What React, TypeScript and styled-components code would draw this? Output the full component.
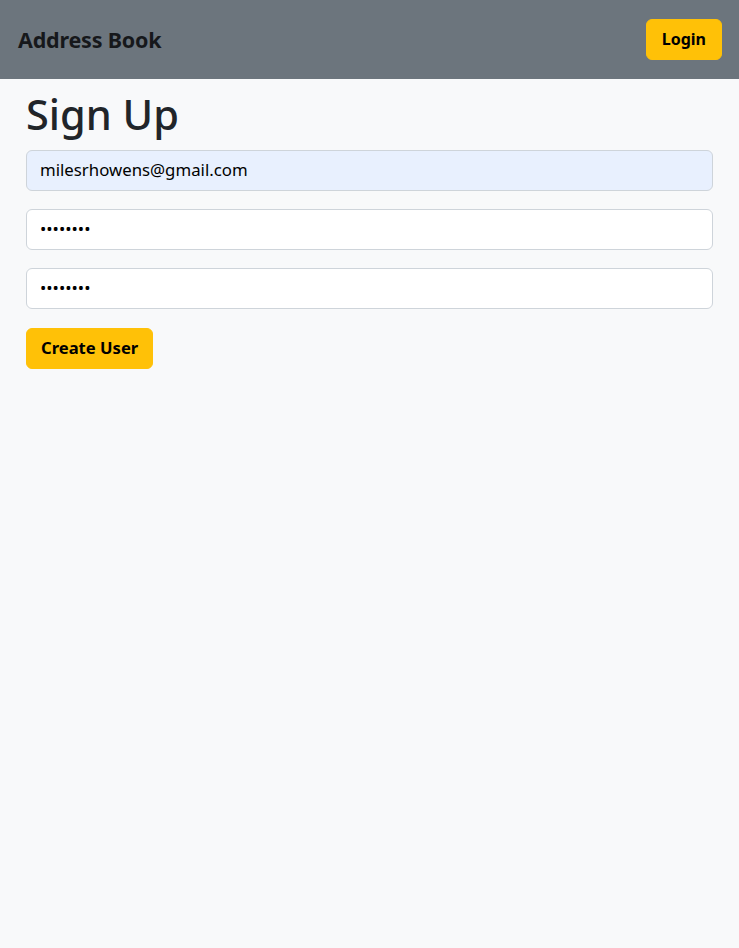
import React from 'react';
import styled, {createGlobalStyle} from 'styled-components';

const GlobalStyle = createGlobalStyle`
  html, body {
    margin: 0;
    padding: 0;
    background: #f8f9fa;
    font-family: "Noto Sans", "Liberation Sans", sans-serif;
    color: #212529;
  }
  * { box-sizing: border-box; }
`;

const Navbar = styled.nav`
  height: 79px;
  background: #6c757d;
  display: flex;
  align-items: center;
  justify-content: space-between;
  padding: 0 17px 0 18px;
`;

const Brand = styled.span`
  font-size: 21.5px;
  font-weight: 700;
  color: #16181b;
  letter-spacing: -0.2px;
`;

const Button = styled.button<{wide?: boolean}>`
  height: 41px;
  padding: 0 ${p => (p.wide ? '14px' : '15px')};
  padding-bottom: 2px;
  background: #ffc107;
  border: 1px solid #ffc107;
  border-radius: 6px;
  font-family: inherit;
  font-size: ${p => (p.wide ? '16.6px' : '16px')};
  font-weight: 700;
  color: #000;
  cursor: pointer;
`;

const Main = styled.main`
  padding: 0 26px;
`;

const Title = styled.h1`
  margin: 11px 0 12px;
  font-size: 41.5px;
  font-weight: 500;
  line-height: 48px;
`;

const Form = styled.form`
  display: flex;
  flex-direction: column;
  gap: 18px;
  align-items: flex-start;
  & > button {
    margin-top: 1px;
  }
`;

const Input = styled.input<{filled?: boolean}>`
  width: 100%;
  height: 41px;
  padding: 0 13px;
  padding-bottom: 2px;
  border: 1px solid #ced4da;
  border-radius: 6px;
  background: ${p => (p.filled ? '#e8f0fe' : '#fff')};
  font-family: inherit;
  font-size: 16.8px;
  color: #000;
  outline: none;
`;

export default function App() {
  return (
    <>
      <GlobalStyle />
      <Navbar>
        <Brand>Address Book</Brand>
        <Button>Login</Button>
      </Navbar>
      <Main>
        <Title>Sign Up</Title>
        <Form onSubmit={e => e.preventDefault()}>
          <Input filled type="email" defaultValue="milesrhowens@gmail.com" />
          <Input type="password" defaultValue="password" />
          <Input type="password" defaultValue="password" />
          <Button wide>Create User</Button>
        </Form>
      </Main>
    </>
  );
}
